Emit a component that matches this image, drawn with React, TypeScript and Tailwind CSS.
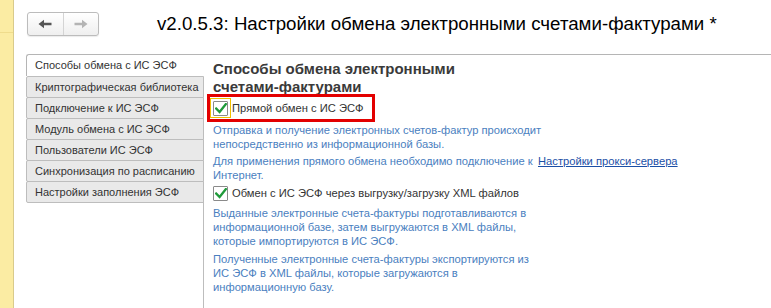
import React from "react";

const Check = () => (
  <svg width="12" height="11" viewBox="0 0 12 11" className="block">
    <path d="M1.2 5.6 L4.6 9 L10.8 1.2" fill="none" stroke="#1f9a3a" strokeWidth="2.4" strokeLinecap="square" />
  </svg>
);

const CheckBox = () => (
  <div className="w-[15px] h-[15px] border border-[#8a8a8a] bg-white flex items-center justify-center rounded-[1px]">
    <Check />
  </div>
);

const tabs = [
  "Криптографическая библиотека",
  "Подключение к ИС ЭСФ",
  "Модуль обмена с ИС ЭСФ",
  "Пользователи ИС ЭСФ",
  "Синхронизация по расписанию",
  "Настройки заполнения ЭСФ",
];

export default function App() {
  return (
    <div className="w-[771px] h-[308px] flex bg-white overflow-hidden font-['Liberation_Sans',Arial,sans-serif] text-[#333]">
      <div className="w-[14px] shrink-0 bg-[#fbeca3] border-r border-[#d9cb8c] flex flex-col">
        <div className="h-[33px] border-b border-[#efdc8c]" />
      </div>
      <div className="flex-1 flex flex-col min-w-0">
        <div className="h-[54px] shrink-0 flex items-center pl-[13px] pb-[6px]">
          <div className="flex w-[72px] h-[24px] border border-[#bcbcbc] rounded-[3px] bg-gradient-to-b from-white to-[#efefef] shadow-[0_1px_1px_rgba(0,0,0,0.08)]">
            <div className="flex-1 flex items-center justify-center border-r border-[#d4d4d4]">
              <svg width="14" height="10" viewBox="0 0 14 10">
                <path d="M0.5 5 L6 0.8 L6 3.8 L13.5 3.8 L13.5 6.2 L6 6.2 L6 9.2 Z" fill="#555" />
              </svg>
            </div>
            <div className="flex-1 flex items-center justify-center">
              <svg width="14" height="10" viewBox="0 0 14 10">
                <path d="M13.5 5 L8 0.8 L8 3.8 L0.5 3.8 L0.5 6.2 L8 6.2 L8 9.2 Z" fill="#b4b4b4" />
              </svg>
            </div>
          </div>
          <div className="ml-[58px] text-[18.7px] text-black whitespace-nowrap leading-none">
            v2.0.5.3: Настройки обмена электронными счетами-фактурами *
          </div>
        </div>
        <div className="flex-1 flex pl-[12px]">
          <div className="w-[178px] shrink-0 flex flex-col text-[11px]">
            <div className="h-[22px] border-t border-l border-[#b5b5b5] rounded-tl-[3px] bg-white flex items-center pl-[8px] whitespace-nowrap">
              Способы обмена с ИС ЭСФ
            </div>
            {tabs.map((t) => (
              <div
                key={t}
                className="h-[22px] -mb-px border border-[#bdbdbd] rounded-l-[2px] bg-[#e9e9e9] flex items-center pl-[8px] whitespace-nowrap"
              >
                {t}
              </div>
            ))}
            <div className="flex-1 border-r border-[#bdbdbd]" />
          </div>
          <div className="flex-1 border-t border-[#b5b5b5] pl-[9px] pt-[5px] text-[11.2px]">
            <div className="w-[300px] text-[15px] font-bold leading-[18px] text-[#3a3a3a]">
              Способы обмена электронными счетами-фактурами
            </div>
            <div className="relative flex items-center h-[20px] mt-[2px]">
              <div className="absolute left-[-6px] top-[-4px] w-[168px] h-[28px] border-[3px] border-[#e30000]" />
              <div className="ml-[-3px] w-[21px] h-[20px] border border-[#f0c000] flex items-center justify-center">
                <CheckBox />
              </div>
              <span className="ml-[1px] whitespace-nowrap">Прямой обмен с ИС ЭСФ</span>
            </div>
            <div className="mt-[5px] w-[335px] text-[#4a80c0] leading-[14px]">
              Отправка и получение электронных счетов-фактур происходит непосредственно из информационной базы.
            </div>
            <div className="mt-[3px] flex">
              <div className="w-[325px] text-[#4a80c0] leading-[14px]">
                Для применения прямого обмена необходимо подключение к Интернет.
              </div>
              <a className="text-[#1b4fa6] underline whitespace-nowrap leading-[14px]">Настройки прокси-сервера</a>
            </div>
            <div className="mt-[2px] flex items-center h-[18px]">
              <CheckBox />
              <span className="ml-[4px] whitespace-nowrap">Обмен с ИС ЭСФ через выгрузку/загрузку XML файлов</span>
            </div>
            <div className="mt-[4px] w-[325px] text-[#4a80c0] leading-[14px]">
              Выданные электронные счета-фактуры подготавливаются в информационной базе, затем выгружаются в XML файлы, которые импортируются в ИС ЭСФ.
            </div>
            <div className="mt-[4px] w-[325px] text-[#4a80c0] leading-[14px]">
              Полученные электронные счета-фактуры экспортируются из ИС ЭСФ в XML файлы, которые загружаются в информационную базу.
            </div>
          </div>
        </div>
      </div>
    </div>
  );
}
